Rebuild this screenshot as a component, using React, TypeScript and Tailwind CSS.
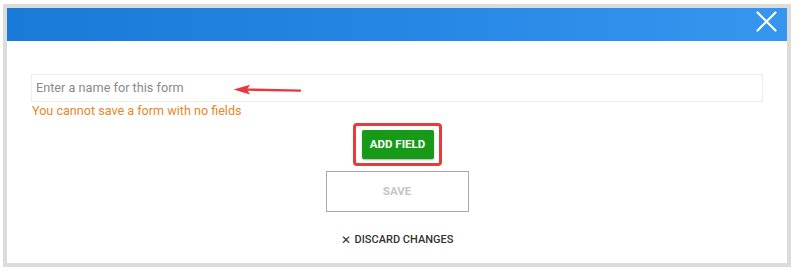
import React from "react";

export default function App() {
  return (
    <div
      className="w-[803px] h-[276px] bg-white pt-[4px] pl-[3px]"
      style={{ fontFamily: "Roboto, 'Liberation Sans', sans-serif" }}
    >
      <div className="w-[788px] h-[263px] border-4 border-[#dcdcdc] flex flex-col bg-white">
        <div className="h-[33px] shrink-0 bg-gradient-to-r from-[#1a7ad8] via-[#2686e4] to-[#3696ef] flex justify-end items-start pt-[3px] pr-[10px]">
          <svg width="21" height="21" viewBox="0 0 21 21" fill="none">
            <path d="M1.5 1.5 L19.5 19.5 M19.5 1.5 L1.5 19.5" stroke="white" strokeWidth="2.2" strokeLinecap="round" />
          </svg>
        </div>
        <div className="flex flex-col px-[24px] pt-[33px]">
          <div className="relative h-[28px] border border-[#ededed] flex items-center pl-[4px]">
            <span className="text-[12.7px] text-[#8a8a8a] leading-none">Enter a name for this form</span>
            <svg className="absolute left-[201px] top-[9px]" width="68" height="12" viewBox="0 0 68 12" fill="none">
              <path d="M14 5.6 L67 6.6" stroke="#e8383d" strokeWidth="2.4" strokeLinecap="round" />
              <path d="M0.5 5.5 L17 0.8 L14 5.6 L17 10.4 Z" fill="#e8383d" />
            </svg>
          </div>
          <div className="text-[12.6px] leading-[17px] text-[#e8862a] pl-[1px]">
            You cannot save a form with no fields
          </div>
          <div className="flex flex-col items-center">
            <div className="mt-[4px] border-[3px] border-[#e53b3b] rounded-[4px] pt-[4px] pb-[4px] pl-[6px] pr-[5px]">
              <div className="w-[72px] h-[29px] bg-[#179a17] rounded-[2px] shadow-[0_1px_2px_rgba(0,0,0,0.3)] flex items-center justify-center text-white text-[11.5px] font-bold">
                ADD FIELD
              </div>
            </div>
            <div className="mt-[5px] w-[143px] h-[41px] border border-[#a9a9a9] flex items-center justify-center text-[11.5px] font-bold text-[#c4c4c4]">
              SAVE
            </div>
            <div className="mt-[21px] flex items-center text-[11px] font-medium text-[#333333] leading-[14px]">
              <span className="mr-[4px] text-[12px]">✕</span>
              <span>DISCARD CHANGES</span>
            </div>
          </div>
        </div>
      </div>
    </div>
  );
}
